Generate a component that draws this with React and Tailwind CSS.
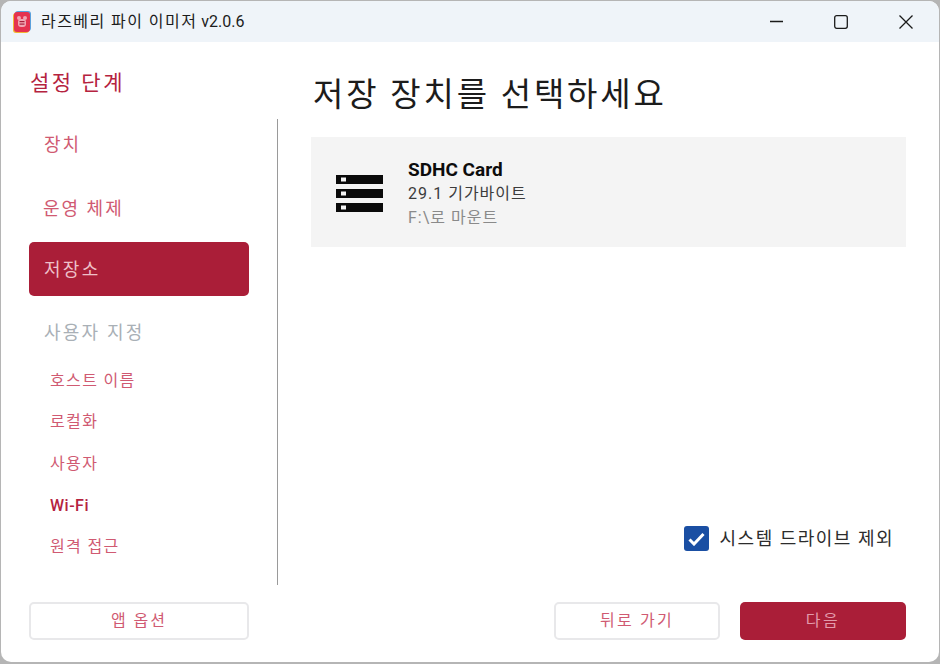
const FONT = "font-['Roboto','Noto_Sans_CJK_KR',sans-serif]"

function AppIcon() {
  return (
    <svg width="18" height="22" viewBox="0 0 18 22" className="shrink-0">
      <rect x="2" y="0" width="16" height="20" rx="3" fill="#5aa0dc" />
      <rect x="0" y="2" width="16" height="20" rx="3" fill="#f2b632" />
      <rect x="1" y="1" width="16" height="20" rx="3" fill="#e5324f" />
      <circle cx="6" cy="7" r="2" fill="#f0a8b4" />
      <circle cx="12" cy="7" r="2" fill="#f0a8b4" />
      <rect x="5" y="8" width="8" height="8" rx="3" fill="#f0a8b4" />
      <rect x="6.5" y="10" width="5" height="1.2" fill="#a81f3a" />
      <rect x="6.5" y="12.5" width="5" height="1.2" fill="#a81f3a" />
    </svg>
  )
}

function StorageIcon() {
  return (
    <svg width="47" height="37" viewBox="0 0 47 37" className="mt-[3px] shrink-0">
      <rect x="0" y="0" width="47" height="9" fill="#0a0a0a" />
      <rect x="0" y="14" width="47" height="9" fill="#0a0a0a" />
      <rect x="0" y="28" width="47" height="9" fill="#0a0a0a" />
      <rect x="5" y="2.5" width="5" height="4" fill="#f4f4f4" />
      <rect x="5" y="16.5" width="5" height="4" fill="#f4f4f4" />
      <rect x="5" y="30.5" width="5" height="4" fill="#f4f4f4" />
    </svg>
  )
}

function WindowControls() {
  return (
    <div className="ml-auto flex items-center gap-[51px]">
      <svg width="13" height="14" viewBox="0 0 13 14">
        <path d="M0 6.5H13" stroke="#1a1a1a" strokeWidth="1.3" />
      </svg>
      <svg width="14" height="14" viewBox="0 0 14 14">
        <rect x="0.7" y="0.7" width="12.6" height="12.6" rx="2" fill="none" stroke="#1a1a1a" strokeWidth="1.3" />
      </svg>
      <svg width="14" height="14" viewBox="0 0 14 14">
        <path d="M0.5 0.5L13.5 13.5M13.5 0.5L0.5 13.5" stroke="#1a1a1a" strokeWidth="1.3" />
      </svg>
    </div>
  )
}

const subSteps = ['호스트 이름', '로컬화', '사용자', 'Wi-Fi', '원격 접근']

export default function App() {
  return (
    <div className={`h-[664px] w-[940px] overflow-hidden bg-[#b5b5b5] ${FONT}`}>
      <div className="mx-[1px] mt-[1px] flex h-[661px] w-[938px] flex-col overflow-hidden rounded-[10px] bg-white">
        <header className="flex h-[41px] shrink-0 items-center bg-[#eff4f9] pl-[12px] pr-[26px]">
          <AppIcon />
          <span className="ml-[10px] text-[16px] text-[#1c1c1c]">
            <span className="tracking-[1.45px]">라즈베리 파이 이미저</span> v2.0.6
          </span>
          <WindowControls />
        </header>

        <div className="flex min-h-0 flex-1">
          <aside className="flex w-[277px] shrink-0 flex-col">
            <h2 className="pl-[29px] pt-[26px] text-[21px] font-normal leading-[30px] tracking-[2.5px] text-[#b5233f]">설정 단계</h2>
            <div className="mt-[19px] flex">
              <nav className="w-[248px] pl-[28px] text-[18px] tracking-[2px] text-[#d05a72]">
                <div className="flex h-[54px] items-center pl-[15px]">장치</div>
                <div className="mt-[9px] flex h-[54px] items-center pl-[14px] pt-[2px]">운영 체제</div>
                <div className="mt-[8px] flex h-[54px] items-center rounded-[5px] bg-[#aa1e38] pl-[15px] tracking-[2.3px] text-[#eec0c9]">저장소</div>
                <div className="mt-[8px] flex h-[54px] items-center pl-[15px] pt-[2px] tracking-[2.2px] text-[#a9b0b6]">사용자 지정</div>
                <ul className="mt-[2px] pl-[21px] text-[16px] tracking-[1.35px]">
                  {subSteps.map((step) => (
                    <li
                      key={step}
                      className={`flex h-[41.5px] items-center ${step === 'Wi-Fi' ? 'pt-[2px] font-medium tracking-[0.5px] text-[#b5233f]' : ''}`}
                    >
                      {step}
                    </li>
                  ))}
                </ul>
              </nav>
              <div className="ml-auto mt-[2px] h-[466px] w-[1px] bg-[#9a9a9a]" />
            </div>
            <div className="mt-[17px] pl-[28px]">
              <button className="h-[38px] w-[220px] rounded-[5px] border-2 border-[#e8e8ea] bg-white text-[16px] tracking-[2px] text-[#d05a72]">앱 옵션</button>
            </div>
          </aside>

          <main className="flex min-w-0 flex-1 flex-col pl-[33px] pr-[33px]">
            <h1 className="pl-[2px] pt-[29px] text-[33px] font-normal leading-[48px] tracking-[2.8px] text-[#1c1c1c]">저장 장치를 선택하세요</h1>
            <section className="mt-[18px] flex h-[110px] items-center bg-[#f4f4f4] pl-[25px]">
              <StorageIcon />
              <div className="ml-[25px] flex flex-col pt-[4px] leading-[24px]">
                <div className="text-[19px] font-bold text-[#0c0c0c]">SDHC Card</div>
                <div className="text-[16px] tracking-[1px] text-[#3c3c3c]">29.1 기가바이트</div>
                <div className="text-[16px] tracking-[1px] text-[#8a8a8a]">F:\로 마운트</div>
              </div>
            </section>
            <div className="mt-auto flex items-center justify-end pr-[12px]">
              <span className="flex h-[25px] w-[25px] items-center justify-center rounded-[3px] bg-[#1a4fa3]">
                <svg width="17" height="14" viewBox="0 0 17 14">
                  <path d="M1.5 7.5 L6 12 L15.5 2" fill="none" stroke="#fff" strokeWidth="3" />
                </svg>
              </span>
              <span className="ml-[11px] text-[18px] tracking-[1.5px] text-[#2c2c2c]">시스템 드라이브 제외</span>
            </div>
            <div className="mb-[22px] mt-[50px] flex justify-end gap-[20px]">
              <button className="h-[38px] w-[166px] rounded-[5px] border-2 border-[#e8e8ea] bg-white text-[16px] tracking-[2.2px] text-[#d05a72]">뒤로 가기</button>
              <button className="h-[38px] w-[166px] rounded-[5px] bg-[#aa1e38] text-[16px] tracking-[2.5px] text-[#e39aab]">다음</button>
            </div>
          </main>
        </div>
      </div>
    </div>
  )
}
